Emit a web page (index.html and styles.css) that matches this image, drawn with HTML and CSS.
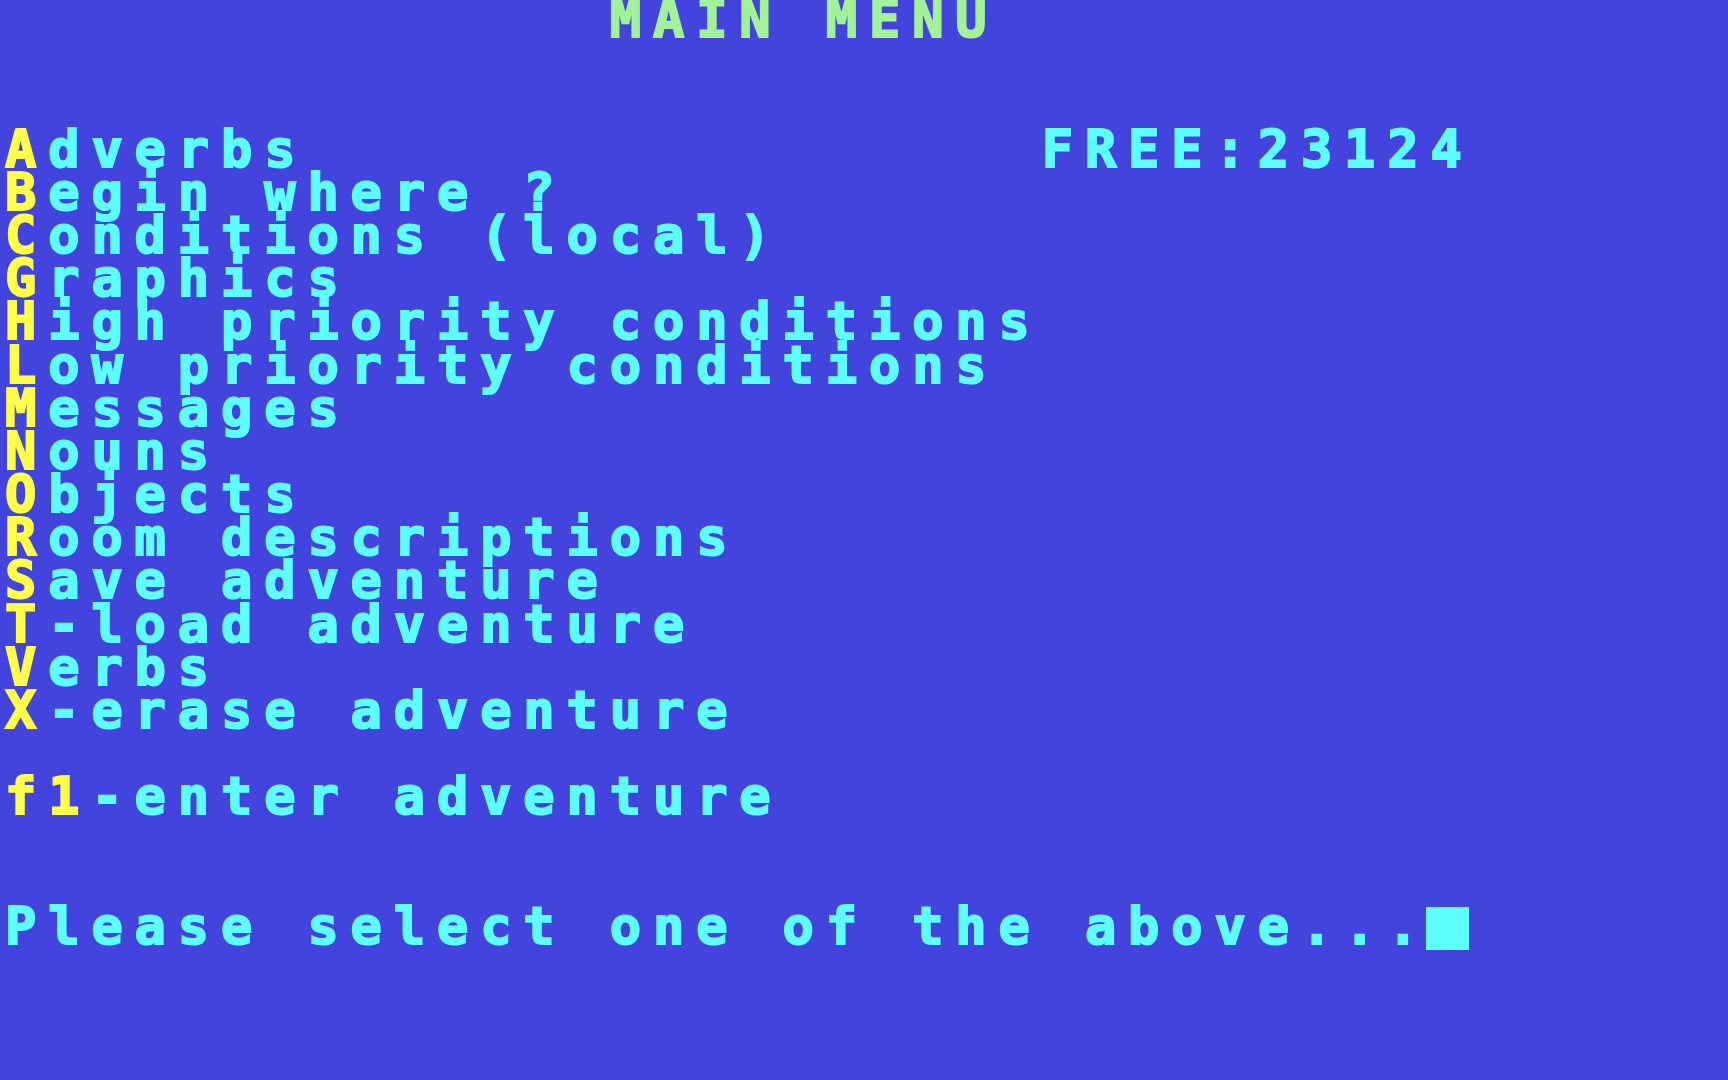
FILE: index.html
```html
<!DOCTYPE html>
<html lang="en">
<head>
<meta charset="utf-8">
<title>MAIN MENU</title>
<link rel="stylesheet" href="styles.css">
</head>
<body>
<main class="screen">
<div class="row"><span class="title">              MAIN MENU</span></div>
<div class="row"> </div>
<div class="row"> </div>
<div class="row"><span class="hot">A</span>dverbs                 FREE:23124</div>
<div class="row"><span class="hot">B</span>egin where ?</div>
<div class="row"><span class="hot">C</span>onditions (local)</div>
<div class="row"><span class="hot">G</span>raphics</div>
<div class="row"><span class="hot">H</span>igh priority conditions</div>
<div class="row"><span class="hot">L</span>ow priority conditions</div>
<div class="row"><span class="hot">M</span>essages</div>
<div class="row"><span class="hot">N</span>ouns</div>
<div class="row"><span class="hot">O</span>bjects</div>
<div class="row"><span class="hot">R</span>oom descriptions</div>
<div class="row"><span class="hot">S</span>ave adventure</div>
<div class="row"><span class="hot">T</span>-load adventure</div>
<div class="row"><span class="hot">V</span>erbs</div>
<div class="row"><span class="hot">X</span>-erase adventure</div>
<div class="row"> </div>
<div class="row"><span class="hot">f1</span>-enter adventure</div>
<div class="row"> </div>
<div class="row"> </div>
<div class="row">Please select one of the above...<span class="cursor"></span></div>
<div class="row"> </div>
<div class="row"> </div>
<div class="row"> </div>
</main>
</body>
</html>
```

FILE: styles.css
```css
html, body {
  margin: 0;
  padding: 0;
  background: #4343de;
  width: 1728px;
  height: 1080px;
  overflow: hidden;
}

.screen {
  width: 1728px;
  height: 1080px;
  margin-top: -2px;
  padding-left: 5px;
  box-sizing: border-box;
  font-family: "DejaVu Sans Mono", "Liberation Mono", monospace;
  font-weight: bold;
  font-size: 52px;
  line-height: 43.2px;
  letter-spacing: 11.89px;
  color: #5effff;
  -webkit-text-stroke: 2px currentColor;
}

.row {
  height: 43.2px;
  white-space: pre;
}

.title {
  color: #a2f29a;
}

.hot {
  color: #ffff4a;
}

.cursor {
  display: inline-block;
  width: 43.2px;
  height: 43.2px;
  margin-left: -5px;
  vertical-align: top;
  background: #5effff;
  transform: translateY(2px);
}
```
